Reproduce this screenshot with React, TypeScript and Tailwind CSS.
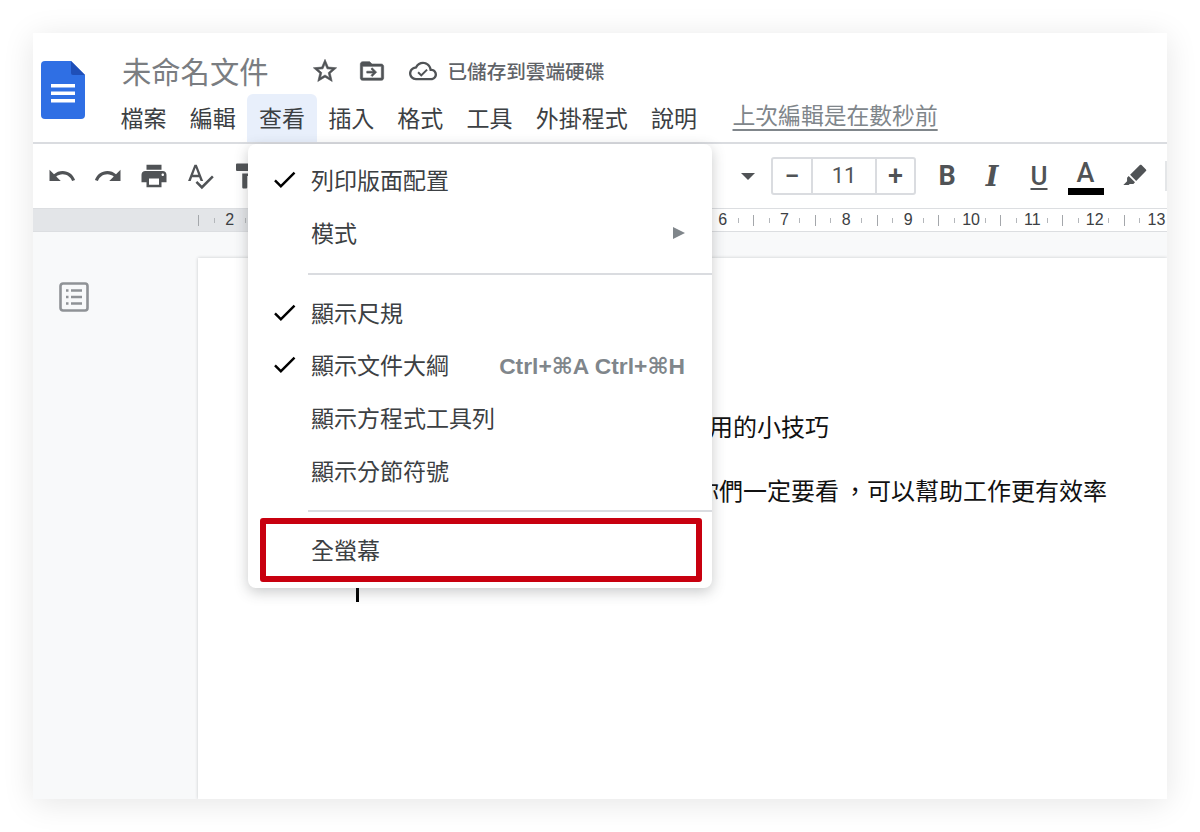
import type { ReactElement } from 'react';

const CJK = 'font-["Noto_Sans_CJK_TC","Noto_Sans",sans-serif]';

const MENU_BAR = ['檔案', '編輯', '查看', '插入', '格式', '工具', '外掛程式', '說明'];

const UNDO = 'M12.5 8c-2.65 0-5.05.99-6.9 2.6L2 7v9h9l-3.62-3.62c1.39-1.16 3.16-1.88 5.12-1.88 3.54 0 6.55 2.31 7.6 5.5l2.37-.78C21.08 11.03 17.15 8 12.5 8z';
const REDO = 'M18.4 10.6C16.55 8.99 14.15 8 11.5 8c-4.65 0-8.58 3.03-9.96 7.22L3.9 16c1.05-3.19 4.05-5.5 7.6-5.5 1.95 0 3.73.72 5.12 1.88L13 16h9V7l-3.6 3.6z';
const PRINT = 'M19 8H5c-1.66 0-3 1.34-3 3v6h4v4h12v-4h4v-6c0-1.66-1.34-3-3-3zm-3 11H8v-5h8v5zm3-7c-.55 0-1-.45-1-1s.45-1 1-1 1 .45 1 1-.45 1-1 1zm-1-9H6v4h12V3z';
const SPELL = 'M12.45 16h2.09L9.43 3H7.57L2.46 16h2.09l1.12-3h5.64l1.14 3zm-6.02-5L8.5 5.48 10.57 11H6.43zm15.16.59l-8.09 8.09L9.83 16l-1.41 1.41 5.09 5.09L23 13l-1.41-1.41z';
const PAINT = 'M18 4V3c0-.55-.45-1-1-1H5c-.55 0-1 .45-1 1v4c0 .55.45 1 1 1h12c.55 0 1-.45 1-1V6h1v4H9v11c0 .55.45 1 1 1h2c.55 0 1-.45 1-1v-9h8V4h-3z';
const STAR = 'M22 9.24l-7.19-.62L12 2 9.19 8.63 2 9.24l5.46 4.73L5.82 21 12 17.27 18.18 21l-1.63-7.03L22 9.24zM12 15.4l-3.76 2.27 1-4.28-3.32-2.88 4.38-.38L12 6.1l1.71 4.04 4.38.38-3.32 2.88 1 4.28L12 15.4z';
const CLOUD = 'M19.35 10.04C18.67 6.59 15.64 4 12 4 9.11 4 6.6 5.64 5.35 8.04 2.34 8.36 0 10.91 0 14c0 3.31 2.69 6 6 6h13c2.76 0 5-2.24 5-5 0-2.64-2.05-4.78-4.65-4.96zM19 18H6c-2.21 0-4-1.79-4-4 0-2.05 1.53-3.76 3.56-3.97l1.07-.11.5-.95C8.08 7.14 9.94 6 12 6c2.62 0 4.88 1.86 5.39 4.43l.3 1.5 1.53.11c1.56.1 2.78 1.41 2.78 2.96 0 1.65-1.35 3-3 3zM10.5 14.6l-2.1-2.1-1.2 1.2 3.3 3.3 5.6-5.6-1.2-1.2z';
const FOLDER = 'M20 6h-8l-2-2H4c-1.1 0-2 .9-2 2v12c0 1.1.9 2 2 2h16c1.1 0 2-.9 2-2V8c0-1.1-.9-2-2-2zm0 12H4V8h16v10zM12.2 9.2l-1.1 1.1 1.9 1.9H7.5v1.6H13l-1.9 1.9 1.1 1.1 3.8-3.8z';
const CHECK = 'M9 16.17L4.83 12l-1.42 1.41L9 19 21 7l-1.41-1.41z';
const MARKER = 'M17.6 2.6l3.8 3.8c.4.4.4 1 0 1.4l-8.4 8.4-5.2-5.2 8.4-8.4c.4-.4 1-.4 1.4 0zM6.6 12l5.4 5.4-1.4 1.4H7.5l-1 1H2l3.2-3.4v-3z';

function Glyph({ d, size, className }: { d: string; size: number; className: string }): ReactElement {
    return (
        <svg viewBox="0 0 24 24" width={size} height={size} fill="currentColor" className={className}>
            <path d={d} />
        </svg>
    );
}

function DocsLogo(): ReactElement {
    return (
        <svg viewBox="0 0 44 58" width={44} height={58} className="shrink-0">
            <path d="M4 0h26l14 14v40a4 4 0 0 1-4 4H4a4 4 0 0 1-4-4V4a4 4 0 0 1 4-4z" fill="#2f6fe4" />
            <path d="M30 0l14 14H32a2 2 0 0 1-2-2z" fill="#1f4fb8" />
            <path d="M10 23h24v3.5H10zM10 30.5h24V34H10zM10 38h24v3.5H10z" fill="#fff" />
        </svg>
    );
}

function OutlineIcon(): ReactElement {
    return (
        <svg viewBox="0 0 30 30" width={30} height={30} fill="none" className="text-[#8f9296]">
            <rect x="1.5" y="1.5" width="27" height="27" rx="2.5" stroke="currentColor" strokeWidth="2.6" />
            <path d="M7 8.5h2.5M7 15h2.5M7 21.5h2.5M12 8.5h11M12 15h11M12 21.5h11" stroke="currentColor" strokeWidth="2.6" />
        </svg>
    );
}

function RulerCell({ n }: { n: number }): ReactElement {
    return (
        <div className="flex w-[61.8px] shrink-0 items-center">
            <span className="w-1/4 text-center">{n}</span>
            <span className="flex w-1/4 justify-center"><i className="h-[5px] w-px bg-[#b4b7bb]" /></span>
            <span className="flex w-1/4 justify-center"><i className="h-[11px] w-px bg-[#a4a7ab]" /></span>
            <span className="flex w-1/4 justify-center"><i className="h-[5px] w-px bg-[#b4b7bb]" /></span>
        </div>
    );
}

function MenuRow({
    label,
    checked,
    right
}: {
    label: string;
    checked?: boolean;
    right?: ReactElement;
}): ReactElement {
    return (
        <div className="flex h-[52.7px] items-center pr-[27px]">
            <div className="flex w-[63px] shrink-0 justify-end pr-[12px]">
                {checked ? <Glyph d={CHECK} size={29} className="text-black" /> : null}
            </div>
            <span className="text-[23px] leading-none text-[#3c4043]">{label}</span>
            {right ? <div className="ml-auto">{right}</div> : null}
        </div>
    );
}

function ViewMenu(): ReactElement {
    return (
        <div className="absolute top-[111px] left-[215px] z-10 h-[444px] w-[464px] rounded-lg bg-white pt-[9.5px] shadow-[0_4px_14px_rgba(60,64,67,0.28)]">
            <MenuRow label="列印版面配置" checked />
            <MenuRow
                label="模式"
                right={<div className="h-0 w-0 border-y-[6px] border-l-[12px] border-y-transparent border-l-[#80868b]" />}
            />
            <div className="mt-[14px] mb-[11px] ml-[60px] h-[2px] bg-[#dadce0]" />
            <MenuRow label="顯示尺規" checked />
            <MenuRow
                label="顯示文件大綱"
                checked
                right={
                    <span className='mt-[3px] block font-["Liberation_Sans","DejaVu_Sans",sans-serif] text-[22.8px] leading-none font-bold text-[#80868b]'>
                        Ctrl+⌘A Ctrl+⌘H
                    </span>
                }
            />
            <MenuRow label="顯示方程式工具列" />
            <MenuRow label="顯示分節符號" />
            <div className="mt-[13px] mb-[6px] ml-[60px] h-[2px] bg-[#dadce0]" />
            <div className="mr-[10px] ml-[12px] flex h-[64px] items-center rounded-[3px] border-[6px] border-[#c8000f] pl-[45px]">
                <span className="text-[23px] leading-none text-[#3c4043]">全螢幕</span>
            </div>
        </div>
    );
}

function Header(): ReactElement {
    return (
        <div className="flex h-[111px] border-b-2 border-[#dadce0] pt-[19px] pl-[8px]">
            <div className="mt-[9px]">
                <DocsLogo />
            </div>
            <div className="ml-[24px] flex flex-col">
                <div className="flex h-[38px] items-center pl-[13px]">
                    <span className="text-[29.3px] leading-none text-[#7a7d81]">未命名文件</span>
                    <Glyph d={STAR} size={28} className="ml-[43px] stroke-current stroke-[0.5] text-[#505356]" />
                    <Glyph d={FOLDER} size={28} className="ml-[19px] stroke-current stroke-[0.5] text-[#505356]" />
                    <Glyph d={CLOUD} size={28} className="ml-[23px] text-[#505356]" />
                    <span className="ml-[10px] text-[19.6px] leading-none font-medium text-[#5f6368]">已儲存到雲端硬碟</span>
                </div>
                <div className="mt-[5px] flex h-[48px] items-center">
                    {MENU_BAR.map((label) => (
                        <div
                            key={label}
                            className={
                                label === '查看'
                                    ? 'flex h-[48px] items-center rounded-t-md bg-[#e8effb] px-[11.6px] pb-[2px] text-[23px] text-[#3c4043]'
                                    : 'flex h-[48px] items-center px-[11.6px] pb-[2px] text-[23px] text-[#3c4043]'
                            }
                        >
                            {label}
                        </div>
                    ))}
                    <span className="mb-[6px] ml-[24px] text-[22.8px] leading-none text-[#80868b] underline underline-offset-[5px]">
                        上次編輯是在數秒前
                    </span>
                </div>
            </div>
        </div>
    );
}

function Toolbar(): ReactElement {
    return (
        <div className='flex h-[64px] items-center pl-[6px] font-["Roboto",sans-serif] text-[#505356]'>
            {[UNDO, REDO, PRINT, SPELL, PAINT].map((d) => (
                <div key={d} className="flex w-[46px] shrink-0 justify-center">
                    <Glyph d={d} size={30} className="" />
                </div>
            ))}
            <div className="ml-[472px] h-0 w-0 border-x-[7px] border-t-[7px] border-x-transparent border-t-[#505356]" />
            <div className="ml-[16px] flex h-[38px] w-[145px] items-center rounded-[3px] border-2 border-[#dadce0] text-center">
                <span className="w-[38px] text-[27px] leading-none font-medium">−</span>
                <span className="h-full w-[66px] border-x-2 border-[#dadce0] text-[22px] leading-[34px]">11</span>
                <span className="flex-1 text-[27px] leading-none font-medium">+</span>
            </div>
            <span className="ml-[21px] w-[20px] text-center text-[27px] leading-none font-bold">B</span>
            <span className='ml-[25px] w-[20px] text-center font-["DejaVu_Serif",serif] text-[27px] leading-none font-bold italic'>
                I
            </span>
            <span className="ml-[27px] w-[20px] text-center text-[26px] leading-none font-medium underline underline-offset-[3px]">U</span>
            <div className="ml-[18px] flex w-[37px] flex-col items-center">
                <span className="text-[27px] leading-[30px] font-medium">A</span>
                <i className="h-[7px] w-[36px] bg-black" />
            </div>
            <Glyph d={MARKER} size={28} className="ml-[17px]" />
            <i className="ml-[16px] h-[30px] w-[2px] bg-[#e4e6e8]" />
        </div>
    );
}

function Ruler(): ReactElement {
    return (
        <div className='flex h-[24px] overflow-hidden border-y border-[#dcdee1] font-["Liberation_Sans",sans-serif] text-[16px] text-[#3c4043]'>
            <div className="flex w-[323px] shrink-0 items-center bg-[#e3e5e8] pl-[158px]">
                <i className="ml-[7px] h-[11px] w-px bg-[#a4a7ab]" />
                <i className="ml-[15px] h-[5px] w-px bg-[#b4b7bb]" />
                <div className="ml-[7px]">
                    <RulerCell n={2} />
                </div>
            </div>
            <div className="flex min-w-0 flex-1 items-center bg-white pl-[50px]">
                {[1, 2, 3, 4, 5, 6, 7, 8, 9, 10, 11, 12, 13].map((n) => (
                    <RulerCell key={n} n={n} />
                ))}
            </div>
        </div>
    );
}

function Workspace(): ReactElement {
    return (
        <div className="flex flex-1 overflow-hidden bg-[#f8f9fa]">
            <div className="w-[165px] shrink-0 pt-[50px] pl-[26px]">
                <OutlineIcon />
            </div>
            <div className="mt-[26px] flex-1 bg-white text-[24px] leading-none text-[#111] shadow-[0_0_3px_rgba(60,64,67,0.25)]">
                <p className="mt-[156px] pl-[511px]">用的小技巧</p>
                <p className="mt-[40px] pl-[497px] whitespace-nowrap">
                    <span className="mr-[4px]">你們一定要看</span>，可以幫助工作更有效率
                </p>
                <i className="mt-[85px] ml-[158px] block h-[15px] w-[3px] bg-black" />
            </div>
        </div>
    );
}

export default function App(): ReactElement {
    return (
        <div className={`h-[832px] w-[1200px] bg-white px-[33px] pt-[33px] pb-[33px] ${CJK}`}>
            <div className="relative flex h-[766px] flex-col bg-white shadow-[0_4px_30px_rgba(0,0,0,0.1)]">
                <Header />
                <Toolbar />
                <Ruler />
                <Workspace />
                <ViewMenu />
            </div>
        </div>
    );
}
